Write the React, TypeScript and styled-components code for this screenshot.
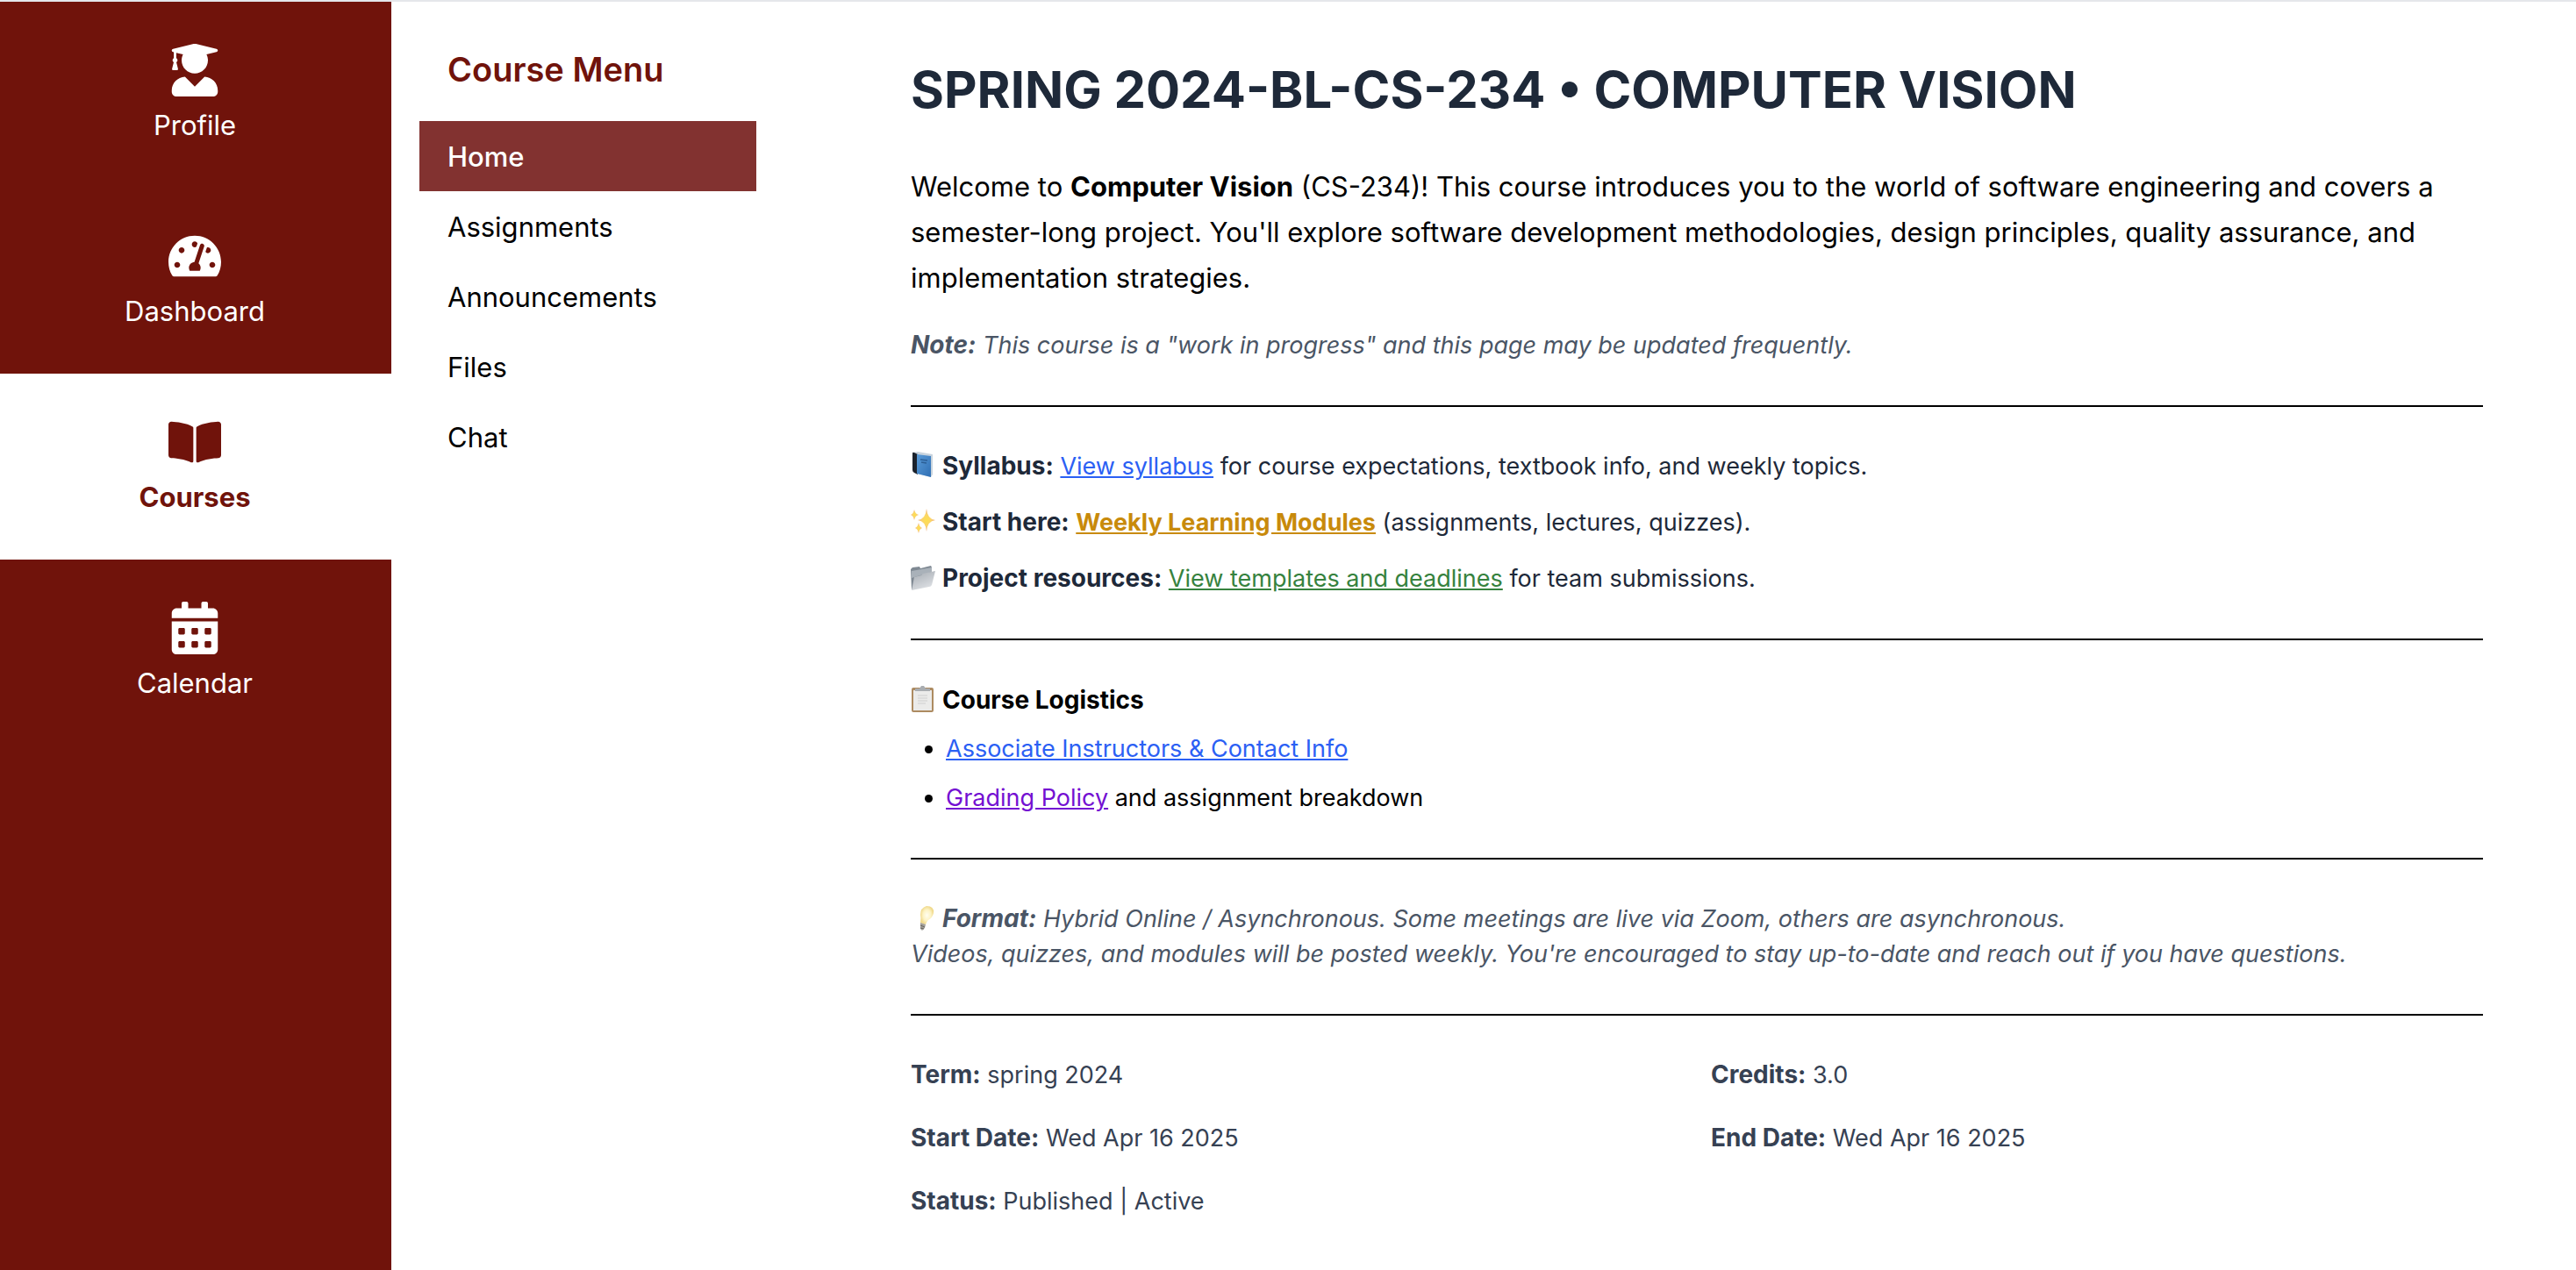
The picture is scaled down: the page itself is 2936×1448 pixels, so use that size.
import React from "react";
import styled, { createGlobalStyle } from "styled-components";
import { FaUserGraduate, FaTachometerAlt, FaBookOpen, FaCalendarAlt } from "react-icons/fa";

const GlobalStyle = createGlobalStyle`
  *, *::before, *::after { box-sizing: border-box; }
  body {
    margin: 0;
    background: #fff;
    color: #000;
    font-family: Inter, "Liberation Sans", sans-serif;
    font-size: 27px;
    line-height: 40px;
  }
  h1, h2, h3, p, ul, dl, dd { margin: 0; padding: 0; }
`;

const Page = styled.div`
  display: grid;
  grid-template-columns: 446px 486px minmax(0, 1fr);
  min-height: 100vh;
  border-top: 2px solid #e5e7eb;
`;

const Sidebar = styled.nav`
  background: #70130b;
`;

const SideLink = styled.a<{ $active?: boolean }>`
  display: flex;
  flex-direction: column;
  align-items: center;
  gap: 9px;
  padding: 48px 2px 47px 0;
  font-size: 31px;
  line-height: 48px;
  text-decoration: none;
  font-weight: ${(p) => (p.$active ? 700 : 400)};
  color: ${(p) => (p.$active ? "#70130b" : "#fff")};
  background: ${(p) => (p.$active ? "#fff" : "transparent")};

  svg { width: 60px; height: 60px; }
`;

const CourseNav = styled.nav`
  padding: 49px 70px 48px 32px;
`;

const MenuTitle = styled.h2`
  margin-bottom: 31px;
  padding: 0 32px;
  font-size: 38px;
  line-height: 56px;
  font-weight: 600;
  color: #70130b;
`;

const MenuLink = styled.a<{ $active?: boolean }>`
  display: block;
  padding: 17px 32px 15px;
  font-size: 31px;
  line-height: 48px;
  text-decoration: none;
  font-weight: ${(p) => (p.$active ? 500 : 400)};
  color: ${(p) => (p.$active ? "#fff" : "#000")};
  background: ${(p) => (p.$active ? "#823230" : "transparent")};
`;

const Main = styled.main`
  padding: 64px 106px;
`;

const Title = styled.h1`
  margin-bottom: 49px;
  font-size: 58px;
  line-height: 72px;
  font-weight: 700;
  color: #1e2939;
`;

const Intro = styled.p`
  margin-bottom: 31px;
  font-size: 31px;
  line-height: 52px;
`;

const Aside = styled.p`
  font-style: italic;
  color: #4a5565;
`;

const Divider = styled.hr`
  margin: 48px 0;
  border: 0;
  border-top: 2px solid #000;
`;

const Resources = styled.div`
  display: flex;
  flex-direction: column;
  gap: 24px;
  color: #1e2939;
`;

const TextLink = styled.a<{ $color: string; $bold?: boolean }>`
  color: ${(p) => p.$color};
  font-weight: ${(p) => (p.$bold ? 700 : 400)};
  text-decoration: underline;
`;

const SectionTitle = styled.h3`
  margin-bottom: 16px;
  font-size: 28px;
  line-height: 40px;
  font-weight: 700;
`;

const Bullets = styled.ul`
  display: flex;
  flex-direction: column;
  gap: 16px;
  && { padding-left: 40px; }
`;

const Facts = styled.dl`
  display: grid;
  grid-template-columns: 1fr 1fr;
  gap: 32px;
  color: #364153;
`;

const Fact = styled.div`
  dt, dd { display: inline; }
  dt { font-size: 28px; line-height: 28px; font-weight: 700; }
`;

const Strong = styled.strong`
  font-weight: 700;
`;

const Label = styled(Strong)`
  font-size: 28px;
  line-height: 28px;
`;

const Emoji = styled.svg`
  width: 28px;
  height: 32px;
  margin-right: 8px;
  vertical-align: -5px;
`;

const BookEmoji = () => (
  <Emoji viewBox="0 0 28 32" aria-hidden="true">
    <defs>
      <linearGradient id="cover" x1="0" y1="0" x2="1" y2="1">
        <stop offset="0" stopColor="#5a9bd8" />
        <stop offset="1" stopColor="#2f6fb4" />
      </linearGradient>
    </defs>
    <path d="M3 2 L8 1 L25 4 V27 L23 30 L8 26Z" fill="#c9d4de" />
    <path d="M2 3 Q2 1 4 2 L8 4 V27 L4 25 Q2 24 2 22Z" fill="#1b222c" />
    <path d="M7 4 L23 6 V30 L7 26Z" fill="url(#cover)" />
    <path d="M11 10 L19 11 M12 13 L18 14" stroke="#2c5f96" strokeWidth="1.4" />
  </Emoji>
);

const SparklesEmoji = () => (
  <Emoji viewBox="0 0 28 32" aria-hidden="true">
    <defs>
      <radialGradient id="spark">
        <stop offset="0" stopColor="#fde04e" />
        <stop offset="0.5" stopColor="#fbd56a" />
        <stop offset="1" stopColor="#eda778" />
      </radialGradient>
    </defs>
    <path d="M18 2 Q19 14 28 15 Q19 16 18 28 Q17 16 8 15 Q17 14 18 2Z" fill="url(#spark)" />
    <path d="M4 3 Q5 8 9 9 Q5 10 4 15 Q3 10 0 9 Q3 8 4 3Z" fill="url(#spark)" />
    <path d="M9 18 Q10 23 13 24 Q10 25 9 30 Q8 25 5 24 Q8 23 9 18Z" fill="url(#spark)" />
  </Emoji>
);

const FolderEmoji = () => (
  <Emoji viewBox="0 0 28 32" aria-hidden="true">
    <defs>
      <linearGradient id="folder" x1="0" y1="0" x2="0.5" y2="1">
        <stop offset="0" stopColor="#a3a9b0" />
        <stop offset="1" stopColor="#dcdfe3" />
      </linearGradient>
    </defs>
    <path d="M0 7 L2 5 L10 4 L11 6 L23 3 L24 5 V24 L1 30Z" fill="#7f8993" />
    <path d="M1 9 L24 5 V10 L1 17Z" fill="#a9b1b9" />
    <path d="M4 16 L12 14 L14 12 L28 9 L24 25 Q23 27 21 27 L1 31Z" fill="url(#folder)" />
  </Emoji>
);

const ClipboardEmoji = () => (
  <Emoji viewBox="0 0 28 32" aria-hidden="true">
    <rect x="1" y="3" width="25" height="28" rx="2" fill="#ad8b61" />
    <rect x="3" y="6" width="21" height="23" fill="#ebebea" />
    <path d="M8 12 H19 M8 15 H19 M8 18 H19 M8 21 H17" stroke="#cfcfcf" strokeWidth="1" />
    <path d="M5 4 H10 L12 1 H15 L17 4 H22 V7 H5Z" fill="#a9adb1" />
  </Emoji>
);

const BulbEmoji = () => (
  <Emoji viewBox="0 0 28 32" aria-hidden="true">
    <defs>
      <radialGradient id="glass">
        <stop offset="0" stopColor="#fffdf0" />
        <stop offset="0.6" stopColor="#fdf3c4" />
        <stop offset="1" stopColor="#f0d98c" />
      </radialGradient>
    </defs>
    <path d="M11 22 Q12 17 11 13 Q11 5 18 3 Q27 3 26 11 Q25 16 20 19 Q18 21 17 24Z" fill="url(#glass)" />
    <path d="M11 22 L17 24 L16 28 L13 31 L11 29Z" fill="#a3a09a" />
    <path d="M11 25 L16 27 M11 28 L15 29" stroke="#66645f" strokeWidth="1" />
  </Emoji>
);

const sideItems = [
  { label: "Profile", Icon: FaUserGraduate },
  { label: "Dashboard", Icon: FaTachometerAlt },
  { label: "Courses", Icon: FaBookOpen, active: true },
  { label: "Calendar", Icon: FaCalendarAlt },
];

const menuItems = ["Home", "Assignments", "Announcements", "Files", "Chat"];

const facts = [
  ["Term:", "spring 2024"],
  ["Credits:", "3.0"],
  ["Start Date:", "Wed Apr 16 2025"],
  ["End Date:", "Wed Apr 16 2025"],
  ["Status:", "Published | Active"],
];

export default function App() {
  return (
    <>
      <GlobalStyle />
      <Page>
        <Sidebar aria-label="Main">
          {sideItems.map(({ label, Icon, active }) => (
            <SideLink key={label} href="#" $active={active}>
              <Icon aria-hidden="true" />
              {label}
            </SideLink>
          ))}
        </Sidebar>
        <CourseNav aria-label="Course">
          <MenuTitle>Course Menu</MenuTitle>
          {menuItems.map((label) => (
            <MenuLink key={label} href="#" $active={label === "Home"}>
              {label}
            </MenuLink>
          ))}
        </CourseNav>
        <Main>
          <Title>SPRING 2024-BL-CS-234 • COMPUTER VISION</Title>
          <Intro>
            Welcome to <Strong>Computer Vision</Strong> (CS-234)! This course introduces you to the
            world of software engineering and covers a semester-long project. You'll explore
            software development methodologies, design principles, quality assurance, and
            implementation strategies.
          </Intro>
          <Aside>
            <Label>Note:</Label> This course is a "work in progress" and this page may be updated
            frequently.
          </Aside>
          <Divider />
          <Resources>
            <p>
              <BookEmoji />
              <Label>Syllabus:</Label>{" "}
              <TextLink href="#" $color="#2b60f4">View syllabus</TextLink> for course expectations,
              textbook info, and weekly topics.
            </p>
            <p>
              <SparklesEmoji />
              <Label>Start here:</Label>{" "}
              <TextLink href="#" $color="#c88a0b" $bold>Weekly Learning Modules</TextLink>{" "}
              (assignments, lectures, quizzes).
            </p>
            <p>
              <FolderEmoji />
              <Label>Project resources:</Label>{" "}
              <TextLink href="#" $color="#36823e">View templates and deadlines</TextLink> for team
              submissions.
            </p>
          </Resources>
          <Divider />
          <SectionTitle>
            <ClipboardEmoji />
            Course Logistics
          </SectionTitle>
          <Bullets>
            <li>
              <TextLink href="#" $color="#2b60f4">Associate Instructors &amp; Contact Info</TextLink>
            </li>
            <li>
              <TextLink href="#" $color="#7410d2">Grading Policy</TextLink> and assignment breakdown
            </li>
          </Bullets>
          <Divider />
          <Aside>
            <BulbEmoji />
            <Label>Format:</Label> Hybrid Online / Asynchronous. Some meetings are live via Zoom,
            others are asynchronous.
            <br />
            Videos, quizzes, and modules will be posted weekly. You're encouraged to stay up-to-date
            and reach out if you have questions.
          </Aside>
          <Divider />
          <Facts>
            {facts.map(([name, value]) => (
              <Fact key={name}>
                <dt>{name}</dt> <dd>{value}</dd>
              </Fact>
            ))}
          </Facts>
        </Main>
      </Page>
    </>
  );
}
